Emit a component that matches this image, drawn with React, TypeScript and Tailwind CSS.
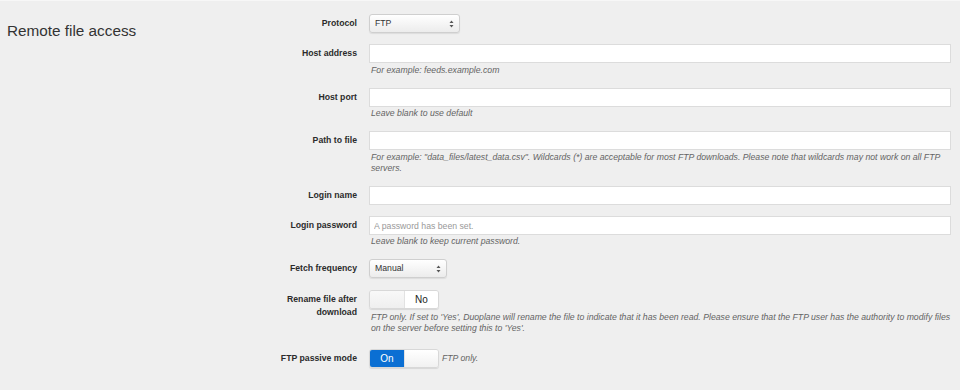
import type { ReactNode } from 'react';

const font = "font-['Liberation_Sans',Arial,Helvetica,sans-serif]";

function SelectArrows() {
  return (
    <svg width="5" height="8" viewBox="0 0 5 8" className="shrink-0">
      <path d="M2.5 0.5 L4.5 3 H0.5 Z" fill="#555" />
      <path d="M2.5 7.5 L4.5 5 H0.5 Z" fill="#555" />
    </svg>
  );
}

function FakeSelect({ value, width }: { value: string; width: string }) {
  return (
    <div
      className={`${width} flex h-[19px] items-center justify-between rounded-[3px] border border-[#cfcfcf] bg-gradient-to-b from-[#ffffff] to-[#ececec] pl-[5px] pr-[5px] text-[8.7px] text-[#333] shadow-[0_1px_1px_rgba(0,0,0,0.08)]`}
    >
      <span>{value}</span>
      <SelectArrows />
    </div>
  );
}

function TextInput({ placeholder }: { placeholder?: string }) {
  return (
    <input
      type="text"
      placeholder={placeholder}
      readOnly
      className="block h-[19px] w-full border border-[#dcdcdc] bg-white px-[4px] text-[8.7px] text-[#333] placeholder:text-[#999] outline-none"
    />
  );
}

function Help({ children, className = '' }: { children: ReactNode; className?: string }) {
  return <p className={`pl-[2px] text-[8.7px] italic leading-[11px] text-[#646464] ${className}`}>{children}</p>;
}

function Row({ label, children, className = '' }: { label: ReactNode; children: ReactNode; className?: string }) {
  return (
    <div className={`flex ${className}`}>
      <label className="w-[117px] shrink-0 pt-[3px] text-right text-[8.7px] font-bold leading-[12.5px] text-[#2b2b2b]">
        {label}
      </label>
      <div className="ml-[12px] flex-1">{children}</div>
    </div>
  );
}

function Toggle({ on }: { on: boolean }) {
  return (
    <div className="flex h-[19px] w-[70px] overflow-hidden rounded-[3px] border border-[#d8d8d8] shadow-[0_1px_1px_rgba(0,0,0,0.1)]">
      {on ? (
        <>
          <div className="flex w-[35px] items-center justify-center bg-[#0b6fd3] text-[10px] text-white">On</div>
          <div className="w-[35px] border-l border-[#e2e2e2] bg-gradient-to-b from-[#ffffff] to-[#f1f1f1]" />
        </>
      ) : (
        <>
          <div className="w-[35px] bg-gradient-to-b from-[#f8f8f8] to-[#efefef]" />
          <div className="flex w-[35px] items-center justify-center border-l border-[#e2e2e2] bg-white text-[10px] text-[#222]">
            No
          </div>
        </>
      )}
    </div>
  );
}

export default function App() {
  return (
    <div className={`min-h-screen border-t border-[#f7f7f7] bg-[#efefef] ${font}`}>
      <div className="flex">
        <div className="w-[240px] shrink-0 pl-[7px] pt-[21px]">
          <h3 className="text-[15.3px] leading-[18px] text-[#333]">Remote file access</h3>
        </div>

        <div className="mr-[9px] flex-1 pt-[13px]">
          <Row label="Protocol" className="mb-[11px]">
            <FakeSelect value="FTP" width="w-[91px]" />
          </Row>

          <Row label="Host address" className="mb-[12px]">
            <TextInput />
            <Help className="mt-[1px] leading-[12px]">For example: feeds.example.com</Help>
          </Row>

          <Row label="Host port" className="mb-[12px]">
            <TextInput />
            <Help className="mt-[0px] leading-[12px]">Leave blank to use default</Help>
          </Row>

          <Row label="Path to file" className="mb-[12px]">
            <TextInput />
            <Help className="mt-[2px]">
              For example: "data_files/latest_data.csv". Wildcards (*) are acceptable for most FTP downloads. Please note
              that wildcards may not work on all FTP servers.
            </Help>
          </Row>

          <Row label="Login name" className="mb-[11px]">
            <TextInput />
          </Row>

          <Row label="Login password" className="mb-[12px]">
            <TextInput placeholder="A password has been set." />
            <Help className="mt-[1px]">Leave blank to keep current password.</Help>
          </Row>

          <Row label="Fetch frequency" className="mb-[12px]">
            <FakeSelect value="Manual" width="w-[78px]" />
          </Row>

          <Row
            label={
              <>
                Rename file after
                <br />
                download
              </>
            }
            className="mb-[15px]"
          >
            <Toggle on={false} />
            <Help className="mt-[3px]">
              FTP only. If set to 'Yes', Duoplane will rename the file to indicate that it has been read. Please ensure
              that the FTP user has the authority to modify files on the server before setting this to 'Yes'.
            </Help>
          </Row>

          <Row label="FTP passive mode">
            <div className="flex items-center">
              <div className="h-[20px]">
                <Toggle on />
              </div>
              <span className="ml-[3px] text-[8.7px] italic text-[#646464]">FTP only.</span>
            </div>
          </Row>
        </div>
      </div>
    </div>
  );
}
